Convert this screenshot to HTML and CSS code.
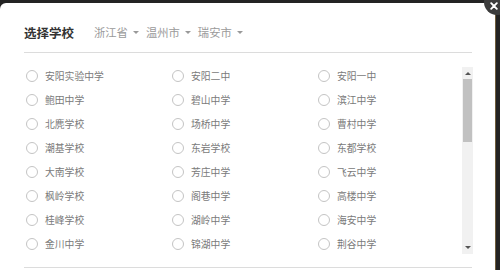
FILE: index.html
```html
<!DOCTYPE html>
<html lang="zh-CN">
<head>
<meta charset="utf-8">
<title>选择学校</title>
<link rel="stylesheet" href="styles.css">
</head>
<body>
<div class="modal">
  <div class="header">
    <span class="title">选择学校</span>
    <span class="crumb">浙江省<i class="caret"></i></span>
    <span class="crumb">温州市<i class="caret"></i></span>
    <span class="crumb">瑞安市<i class="caret"></i></span>
  </div>
  <div class="body">
    <ul class="list">
      <li class="item"><span class="radio"></span>安阳实验中学</li>
      <li class="item"><span class="radio"></span>安阳二中</li>
      <li class="item"><span class="radio"></span>安阳一中</li>
      <li class="item"><span class="radio"></span>鲍田中学</li>
      <li class="item"><span class="radio"></span>碧山中学</li>
      <li class="item"><span class="radio"></span>滨江中学</li>
      <li class="item"><span class="radio"></span>北麂学校</li>
      <li class="item"><span class="radio"></span>场桥中学</li>
      <li class="item"><span class="radio"></span>曹村中学</li>
      <li class="item"><span class="radio"></span>潮基学校</li>
      <li class="item"><span class="radio"></span>东岩学校</li>
      <li class="item"><span class="radio"></span>东都学校</li>
      <li class="item"><span class="radio"></span>大南学校</li>
      <li class="item"><span class="radio"></span>芳庄中学</li>
      <li class="item"><span class="radio"></span>飞云中学</li>
      <li class="item"><span class="radio"></span>枫岭学校</li>
      <li class="item"><span class="radio"></span>阁巷中学</li>
      <li class="item"><span class="radio"></span>高楼中学</li>
      <li class="item"><span class="radio"></span>桂峰学校</li>
      <li class="item"><span class="radio"></span>湖岭中学</li>
      <li class="item"><span class="radio"></span>海安中学</li>
      <li class="item"><span class="radio"></span>金川中学</li>
      <li class="item"><span class="radio"></span>锦湖中学</li>
      <li class="item"><span class="radio"></span>荆谷中学</li>
    </ul>
    <div class="scrollbar">
      <span class="arrow up"></span>
      <span class="thumb"></span>
      <span class="track"></span>
      <span class="arrow down"></span>
    </div>
  </div>
  <div class="footer"></div>
  <span class="close" aria-label="关闭"><svg class="close-x" width="8" height="8" viewBox="0 0 8 8"><path d="M1.2 1.2L6.8 6.8M6.8 1.2L1.2 6.8" stroke="#fff" stroke-width="1.9" stroke-linecap="round"/></svg></span>
</div>
</body>
</html>
```

FILE: styles.css
```css
html {
  overflow: hidden;
  background: #232323;
}

body {
  margin: 0;
  padding: 3px 4px 0 0;
  height: 270px;
  box-sizing: border-box;
  background: #232323;
  font-family: "Noto Sans CJK SC", "Noto Sans", sans-serif;
}

.modal {
  position: relative;
  height: 267px;
  background: #fff;
  border-top-left-radius: 6px;
  border-right: 1px solid #6e5c3c;
  padding: 0 23px 0 24px;
  box-sizing: border-box;
}

.header {
  display: flex;
  align-items: center;
  padding-top: 19px;
  padding-bottom: 10px;
  height: 20px;
  border-bottom: 1px solid #dcdcdc;
}

.title {
  font-size: 12.5px;
  font-weight: bold;
  color: #333;
  margin-right: 20px;
}

.crumb {
  display: flex;
  align-items: center;
  font-size: 11.3px;
  color: #9a9a9a;
  margin-right: 7px;
}

.caret {
  display: inline-block;
  width: 0;
  height: 0;
  margin-left: 5px;
  border-left: 3px solid transparent;
  border-right: 3px solid transparent;
  border-top: 3px solid #999;
}

.body {
  display: flex;
  height: 214px;
  box-sizing: border-box;
  padding-top: 11px;
}

.list {
  list-style: none;
  margin: 0;
  padding: 0;
  flex: 1;
  display: grid;
  grid-template-columns: 146px 146px 146px;
  grid-auto-rows: 24px;
  align-content: start;
}

.item {
  display: flex;
  align-items: center;
  font-size: 9.8px;
  color: #7a7a7a;
  white-space: nowrap;
}

.radio {
  width: 10px;
  height: 10px;
  border: 1px solid #c4c4c4;
  border-radius: 50%;
  margin-left: 2px;
  margin-right: 7px;
  flex: none;
}

.scrollbar {
  display: flex;
  flex-direction: column;
  align-items: center;
  width: 11px;
  margin-top: 3px;
  height: 187px;
  background: #f1f1f1;
  flex: none;
}

.arrow {
  width: 0;
  height: 0;
  border-left: 3px solid transparent;
  border-right: 3px solid transparent;
  flex: none;
}

.arrow.up {
  margin-top: 5px;
  border-bottom: 3px solid #555;
}

.arrow.down {
  margin-bottom: 5px;
  border-top: 3px solid #555;
}

.thumb {
  width: 9px;
  height: 63px;
  margin-top: 4px;
  background: #c1c1c1;
  flex: none;
}

.track {
  flex: 1;
}

.footer {
  border-top: 1px solid #dcdcdc;
  height: 2px;
}

.close {
  position: absolute;
  z-index: 5;
  top: -14px;
  right: -15px;
  width: 26px;
  height: 26px;
  border-radius: 50%;
  background: #3c3c3c;
}

.close-x {
  position: absolute;
  left: 6px;
  top: 13px;
  display: block;
}
```
